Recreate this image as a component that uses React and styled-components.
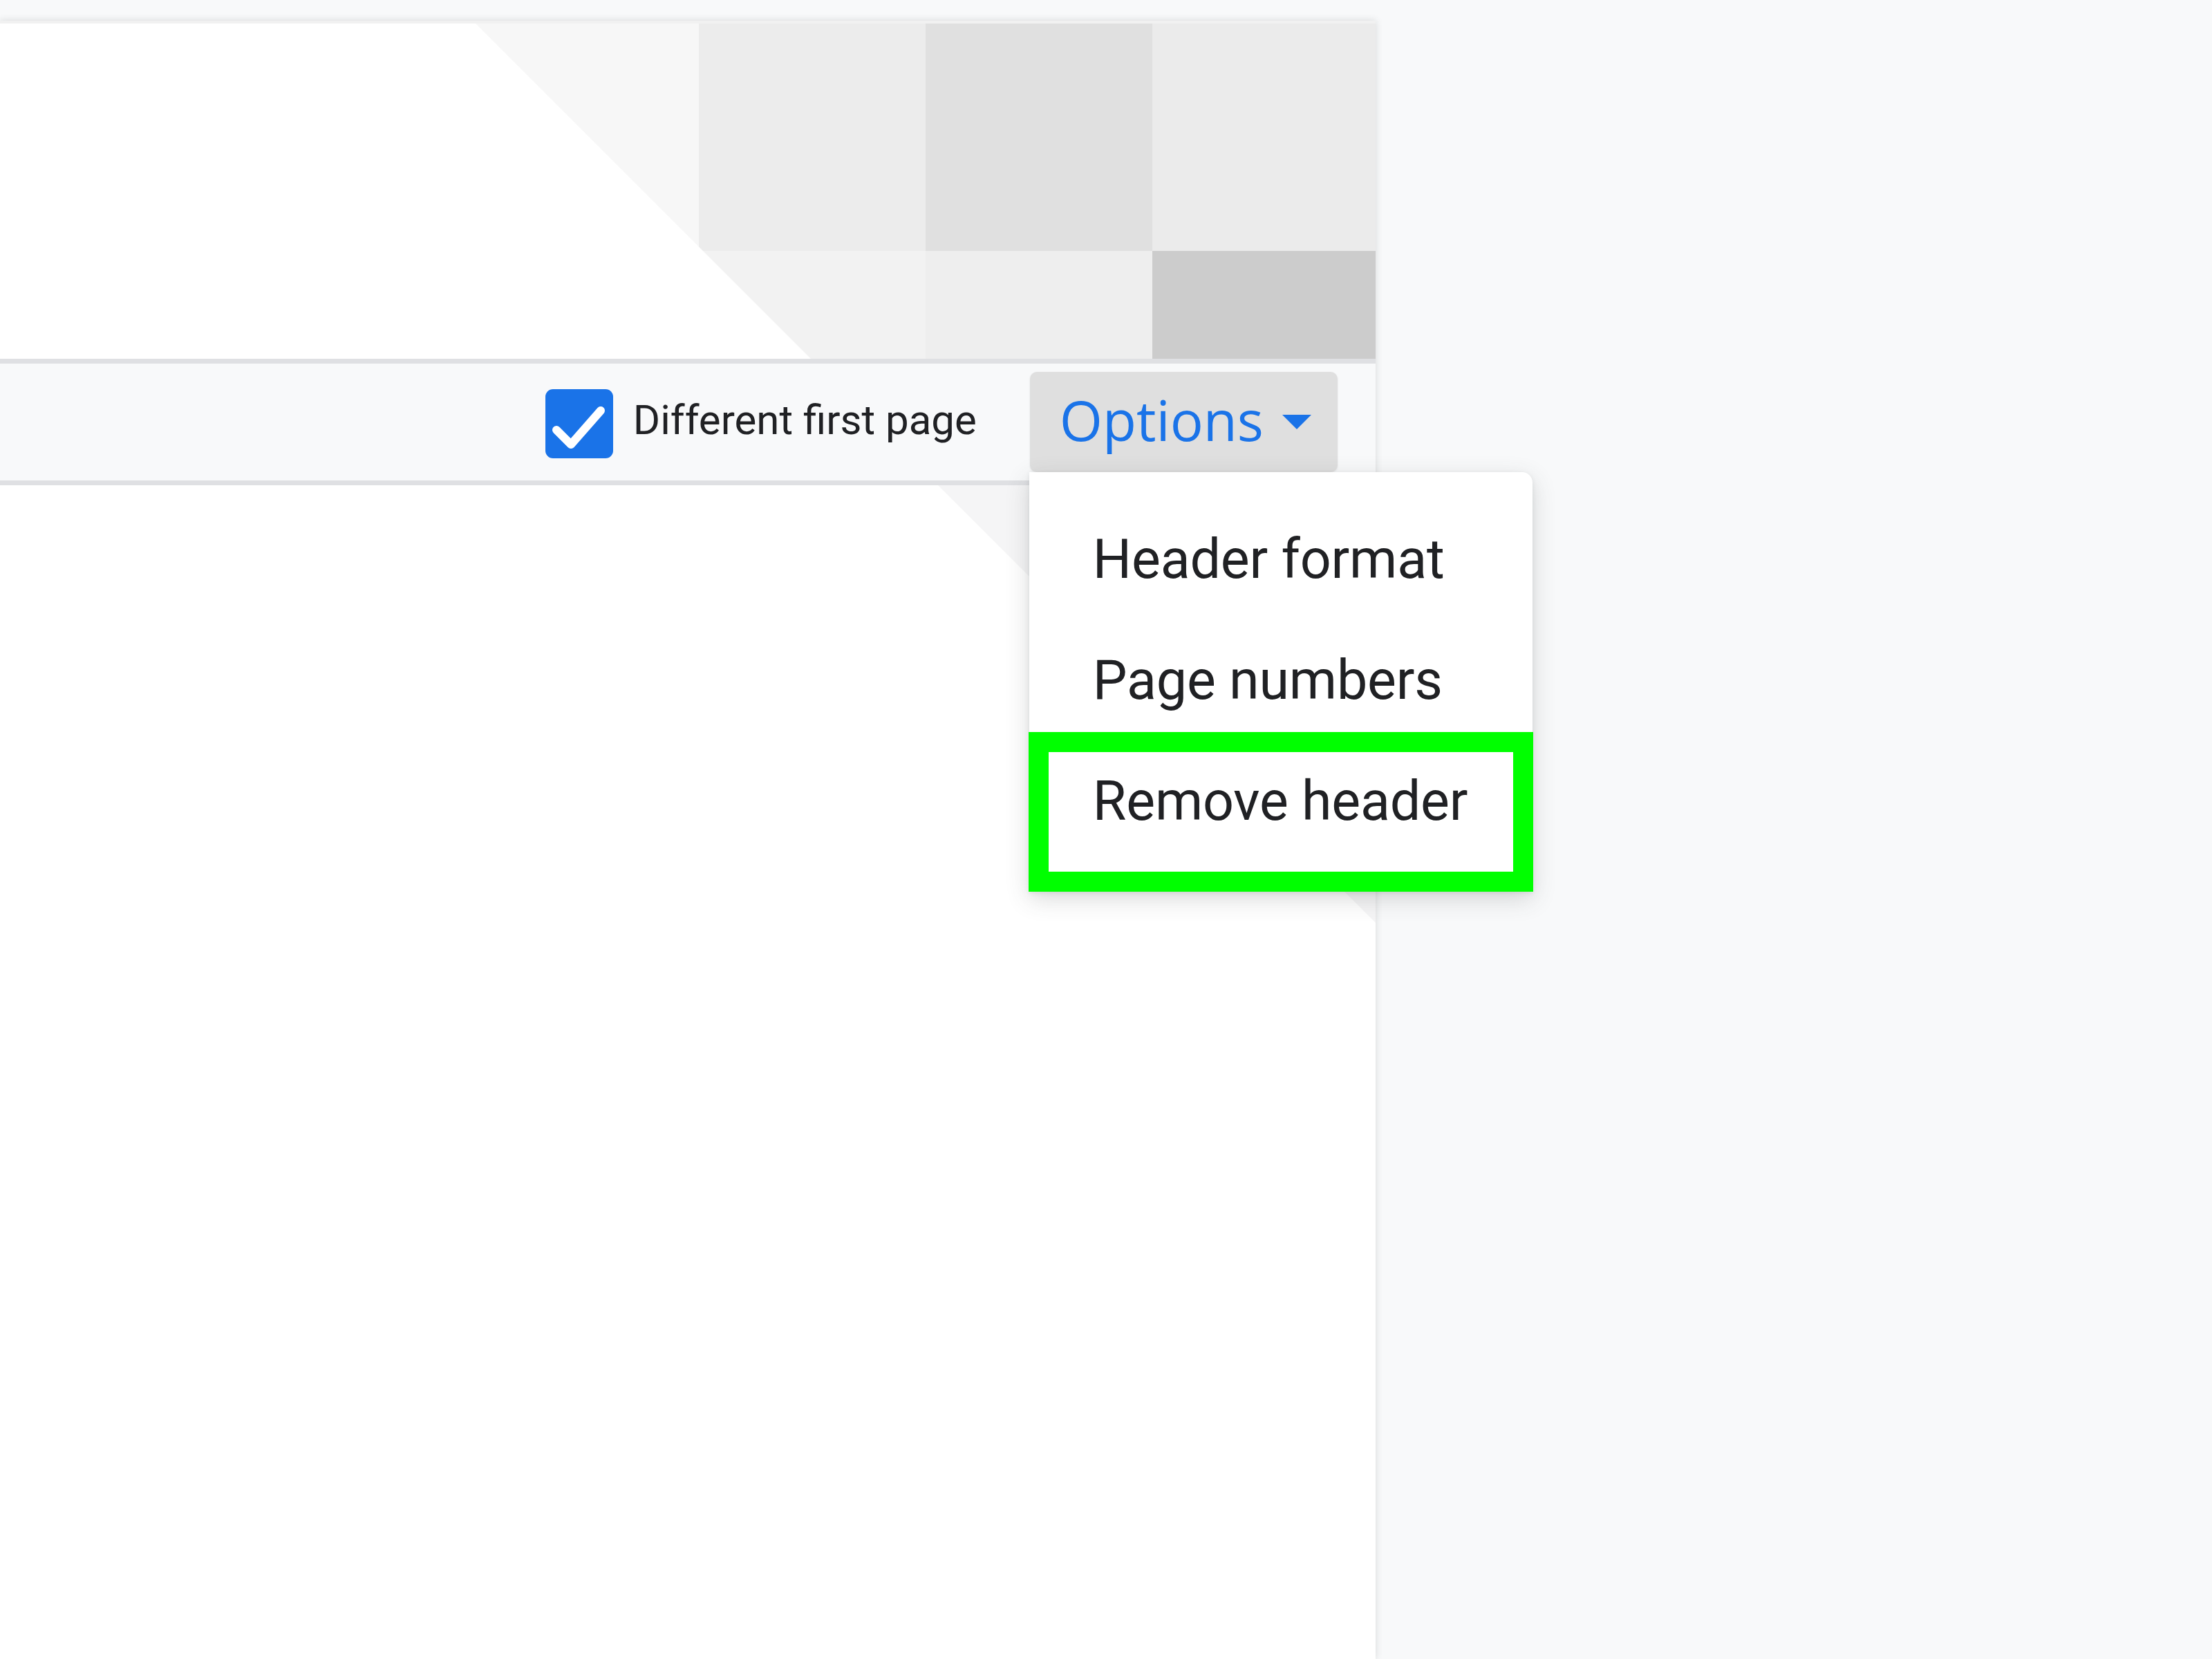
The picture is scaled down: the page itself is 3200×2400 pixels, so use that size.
import React from "react";
import styled, { createGlobalStyle } from "styled-components";

const Global = createGlobalStyle`
  html, body {
    margin: 0;
    padding: 0;
    background: #f8f9fa;
  }
  body {
    width: 3200px;
    height: 2400px;
    overflow: hidden;
    font-family: Roboto, "Liberation Sans", sans-serif;
  }
`;

const Canvas = styled.div`
  width: 3200px;
  height: 2400px;
  padding-top: 30px;
  box-sizing: border-box;
  background: #f8f9fa;
`;

const Page = styled.div`
  position: relative;
  width: 1990px;
  height: 2370px;
  background: #ffffff;
  box-shadow: 0 0 10px rgba(60, 64, 67, 0.18);
  display: flex;
  flex-direction: column;
`;

const HeaderArea = styled.div`
  position: relative;
  height: 489px;
  flex: none;
  overflow: hidden;
  border-top: 4px solid #f1f1f1;
  box-sizing: border-box;
`;

const Fold = styled.div`
  position: absolute;
  inset: 0;
  display: grid;
  grid-template-columns: 1011px 328px 328px 1fr;
  grid-template-rows: 329px 1fr;
  clip-path: polygon(688px 0, 100% 0, 100% 100%, 1173px 100%);
`;

const Cell = styled.div`
  background: ${(p) => p.$c};
`;

const Toolbar = styled.div`
  position: relative;
  z-index: 2;
  flex: none;
  height: 183px;
  box-sizing: border-box;
  border-top: 7px solid #dfe0e3;
  border-bottom: 7px solid #dfe0e3;
  background: #f8f9fa;
  display: flex;
  align-items: center;
  justify-content: flex-end;
  padding-right: 55px;
`;

const CheckLabel = styled.label`
  display: flex;
  align-items: center;
  gap: 29px;
  margin-right: 77px;
`;

const CheckBox = styled.span`
  width: 98px;
  height: 100px;
  border-radius: 11px;
  background: #1a73e8;
  display: flex;
  align-items: center;
  justify-content: center;
  margin-top: 4px;
`;

const LabelText = styled.span`
  font-family: Roboto, "Liberation Sans", sans-serif;
  font-size: 60px;
  color: #202124;
  letter-spacing: 0px;
  margin-top: -6px;
`;

const OptionsWrap = styled.div`
  position: relative;
`;

const OptionsButton = styled.div`
  height: 145px;
  box-sizing: border-box;
  display: flex;
  align-items: center;
  gap: 27px;
  padding: 0 38px 0 43px;
  border-radius: 10px;
  background: #dfdfdf;
  box-shadow: 0 1px 3px rgba(0, 0, 0, 0.08);
`;

const OptionsText = styled.span`
  font-family: "Open Sans", Roboto, sans-serif;
  font-weight: 500;
  font-size: 80px;
  color: #1a73e8;
  line-height: 1;
  margin-top: -8px;
`;

const Menu = styled.div`
  position: absolute;
  top: 100%;
  left: -1px;
  width: 728px;
  box-sizing: border-box;
  padding: 39px 0 43px;
  background: #ffffff;
  border-radius: 0 15px 0 0;
  box-shadow: 0 10px 34px rgba(60, 64, 67, 0.2), 0 2px 6px rgba(60, 64, 67, 0.1);
  z-index: 5;
`;

const MenuItem = styled.div`
  height: 175px;
  line-height: 175px;
  padding-left: 92px;
  font-family: Roboto, "Liberation Sans", sans-serif;
  font-size: 79px;
  letter-spacing: -0.2px;
  color: #202124;
  white-space: nowrap;
`;

const Highlight = styled.div`
  position: absolute;
  left: -1px;
  right: -1px;
  top: 376px;
  bottom: 0;
  border: 29px solid #00ff00;
  pointer-events: none;
`;

const Body = styled.div`
  position: relative;
  flex: 1;
  overflow: hidden;
`;

const BodyFold = styled.div`
  position: absolute;
  inset: 0;
  background: #f5f5f6;
  clip-path: polygon(1357px 0, 100% 0, 100% 633px);
`;

const cells = [
  "#f7f7f7", "#ececec", "#e0e0e0", "#ebebeb",
  "#f2f2f2", "#f2f2f2", "#eeeeee", "#cccccc",
];

export default function App() {
  return (
    <>
      <Global />
      <Canvas>
        <Page>
          <HeaderArea>
            <Fold>
              {cells.map((c, i) => (
                <Cell key={i} $c={c} />
              ))}
            </Fold>
          </HeaderArea>
          <Toolbar>
            <CheckLabel>
              <CheckBox>
                <svg width="98" height="100" viewBox="0 0 98 100">
                  <path
                    d="M16 59 L37 80 L80 31"
                    fill="none"
                    stroke="#ffffff"
                    strokeWidth="12"
                    strokeLinecap="round"
                    strokeLinejoin="round"
                  />
                </svg>
              </CheckBox>
              <LabelText>Different first page</LabelText>
            </CheckLabel>
            <OptionsWrap>
              <OptionsButton>
                <OptionsText>Options</OptionsText>
                <svg width="42" height="21" viewBox="0 0 42 21">
                  <path d="M0 0 L42 0 L21 21 Z" fill="#1a73e8" />
                </svg>
              </OptionsButton>
              <Menu>
                <MenuItem>Header format</MenuItem>
                <MenuItem>Page numbers</MenuItem>
                <MenuItem>Remove header</MenuItem>
                <Highlight />
              </Menu>
            </OptionsWrap>
          </Toolbar>
          <Body>
            <BodyFold />
          </Body>
        </Page>
      </Canvas>
    </>
  );
}
